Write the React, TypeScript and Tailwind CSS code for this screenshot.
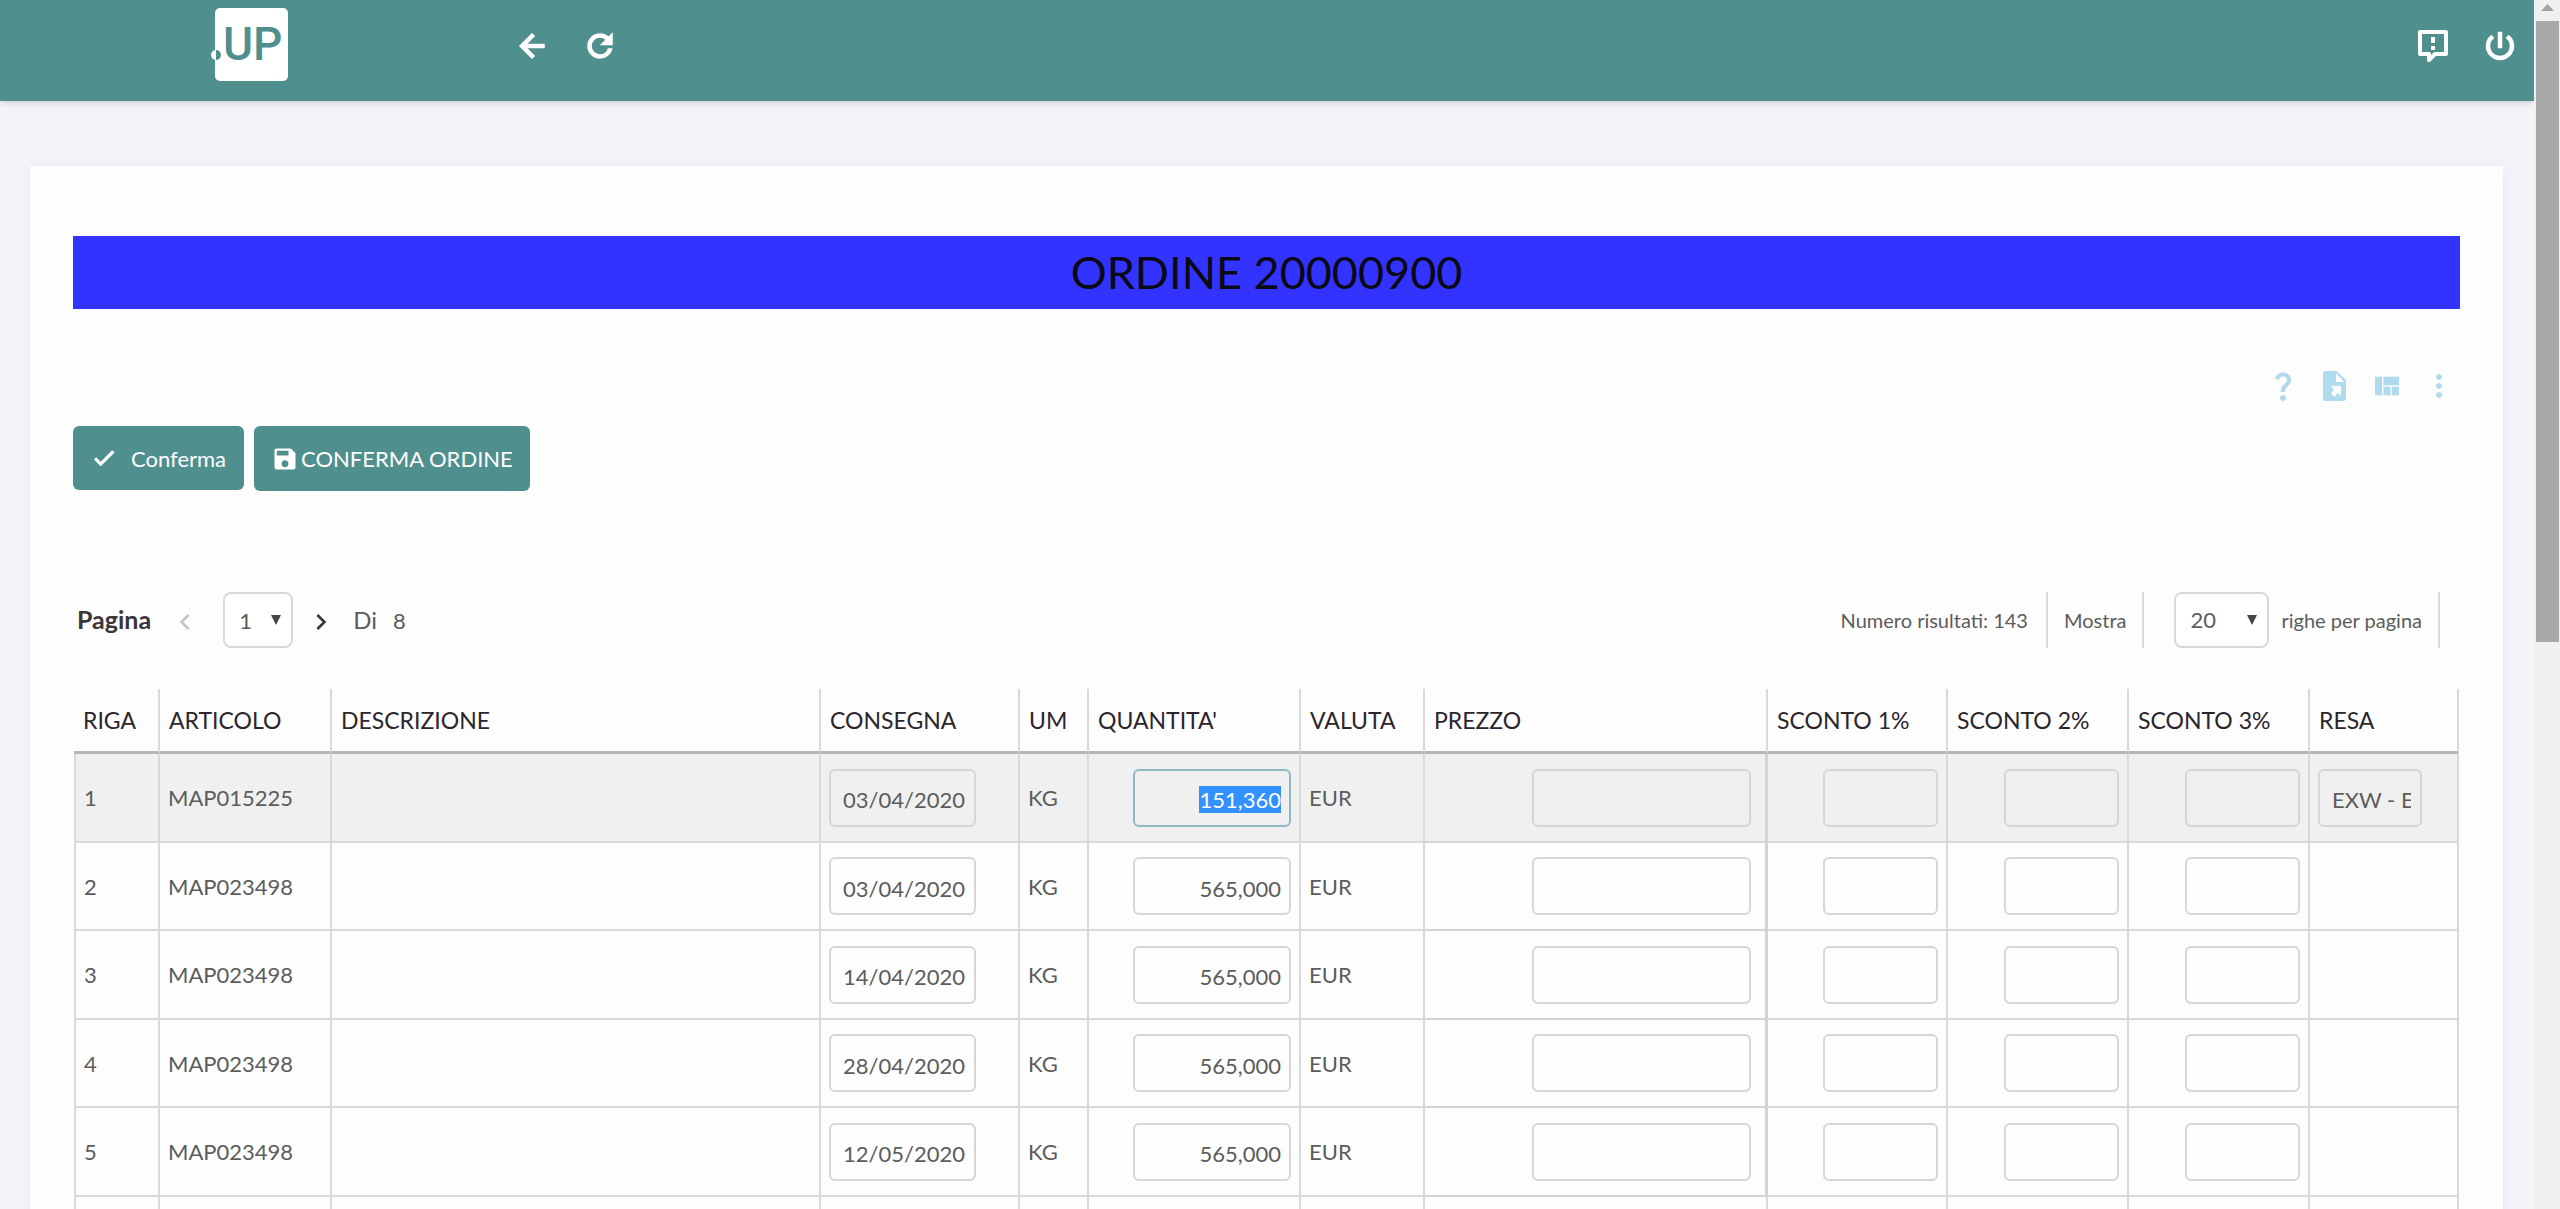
import { useEffect, useRef } from "react";
import type { ReactNode } from "react";
import {
  MdArrowBack,
  MdCheck,
  MdChevronLeft,
  MdChevronRight,
  MdMoreVert,
  MdPowerSettingsNew,
  MdQuestionMark,
  MdRefresh,
  MdSave,
  MdViewQuilt,
} from "react-icons/md";

interface OrderRow {
  riga: string;
  articolo: string;
  consegna: string;
  um: string;
  quantita: string;
  valuta: string;
  resa?: string;
}

const rows: OrderRow[] = [
  { riga: "1", articolo: "MAP015225", consegna: "03/04/2020", um: "KG", quantita: "151,360", valuta: "EUR", resa: "EXW - EX WORKS" },
  { riga: "2", articolo: "MAP023498", consegna: "03/04/2020", um: "KG", quantita: "565,000", valuta: "EUR" },
  { riga: "3", articolo: "MAP023498", consegna: "14/04/2020", um: "KG", quantita: "565,000", valuta: "EUR" },
  { riga: "4", articolo: "MAP023498", consegna: "28/04/2020", um: "KG", quantita: "565,000", valuta: "EUR" },
  { riga: "5", articolo: "MAP023498", consegna: "12/05/2020", um: "KG", quantita: "565,000", valuta: "EUR" },
];

// DESCRIZIONE has no width, it takes whatever is left
const columns = [
  { header: "RIGA", width: "w-[86px]" },
  { header: "ARTICOLO", width: "w-[172px]" },
  { header: "DESCRIZIONE", width: "" },
  { header: "CONSEGNA", width: "w-[199px]" },
  { header: "UM", width: "w-[69px]" },
  { header: "QUANTITA'", width: "w-[212px]" },
  { header: "VALUTA", width: "w-[124px]" },
  { header: "PREZZO", width: "w-[343px]" },
  { header: "SCONTO 1%", width: "w-[180px]" },
  { header: "SCONTO 2%", width: "w-[181px]" },
  { header: "SCONTO 3%", width: "w-[181px]" },
  { header: "RESA", width: "w-[149px]" },
];

const inputClass =
  "block h-[58px] rounded-md border-2 border-[#d6d6d6] bg-transparent pt-1 text-[22px] leading-[27px] text-[#5c5c5c] outline-none";
const cellClass = "border-r-2 border-b-2 border-[#d9d9d9] px-2";

// the md icons carry an empty bounding path, only the drawn one gets the stroke
const boldIcon = "[&>path:not([fill=none])]:stroke-1";

function Logo() {
  return (
    <a href="#" aria-label="UP" className="flex items-center">
      <svg className="h-[73px] w-[77px]" viewBox="0 0 77 73">
        <rect x="4" y="0" width="73" height="73" rx="5" fill="#fff" />
        <circle cx="5" cy="47" r="5" fill="#fff" />
        <path d="M5 42a5 5 0 0 1 0 10z" fill="#4f8f8e" />
        <text x="12" y="52" fontFamily="Roboto, sans-serif" fontSize="46" fontWeight="500" fill="#4f8f8e">
          UP
        </text>
      </svg>
    </a>
  );
}

function FeedbackIcon() {
  return (
    <svg className="h-9 w-8" viewBox="0 0 32 36" fill="none">
      <path d="M3 4h26v22H18l-6 6v-6H3z" stroke="#fff" strokeWidth="4" strokeLinejoin="round" />
      <path d="M14 9h4v6h-4zM14 18h4v4h-4z" fill="#fff" />
    </svg>
  );
}

function FileLinkIcon() {
  return (
    <svg className="h-[30px] w-6" viewBox="0 0 24 30">
      <path
        fillRule="evenodd"
        fill="currentColor"
        d="M3 0h11l9 9v18a3 3 0 0 1-3 3H3a3 3 0 0 1-3-3V3a3 3 0 0 1 3-3zM13 2v9h8zM8 15h10v10l-3-3-4 4-3-4 3-3z"
      />
    </svg>
  );
}

function IconButton({ label, children }: { label: string; children: ReactNode }) {
  return (
    <button type="button" aria-label={label} className="flex items-center justify-center">
      {children}
    </button>
  );
}

interface DropDownProps {
  label: string;
  value: string;
  width: string;
}

function DropDown({ label, value, width }: DropDownProps) {
  return (
    <div className={`relative ${width}`}>
      <select
        aria-label={label}
        defaultValue={value}
        className="h-14 w-full appearance-none rounded-lg border-2 border-[#d9d9d9] bg-white px-[14px] text-[22px] text-[#5c5c5c]"
      >
        <option>{value}</option>
      </select>
      <svg className="pointer-events-none absolute top-[23px] right-3 h-[10px] w-[10px]" viewBox="0 0 10 10">
        <path d="M0 0h10L5 10z" fill="#4a4446" />
      </svg>
    </div>
  );
}

function TopBar() {
  return (
    <header className="flex h-[101px] items-start justify-between bg-[#4f8f8e] pr-4 pl-[211px] text-white shadow-md">
      <div className="flex pt-2">
        <Logo />
        <div className="ml-[226px] flex items-start gap-8 pt-5">
          <IconButton label="Indietro">
            <MdArrowBack className={`h-9 w-9 ${boldIcon}`} />
          </IconButton>
          <IconButton label="Aggiorna">
            <MdRefresh className={`h-9 w-9 ${boldIcon}`} />
          </IconButton>
        </div>
      </div>
      <div className="flex items-center gap-[33px] pt-7">
        <IconButton label="Segnalazioni">
          <FeedbackIcon />
        </IconButton>
        <IconButton label="Esci">
          <MdPowerSettingsNew className={`h-9 w-9 ${boldIcon}`} />
        </IconButton>
      </div>
    </header>
  );
}

function Pagination() {
  return (
    <div className="mt-[101px] flex h-14 items-center justify-between pr-5 pl-1 text-[#5c5c5c]">
      <div className="flex items-center">
        <span className="text-[25px] font-bold text-[#3b3539]">Pagina</span>
        <button type="button" aria-label="Pagina precedente" className="ml-[18px] pt-1 text-[#c4c4c4]">
          <MdChevronLeft className="h-8 w-8" />
        </button>
        <div className="ml-[22px]">
          <DropDown label="Pagina" value="1" width="w-[70px]" />
        </div>
        <button type="button" aria-label="Pagina successiva" className="ml-3 pt-1 text-[#3b3539]">
          <MdChevronRight className="h-8 w-8" />
        </button>
        <span className="ml-4 text-2xl">Di</span>
        <span className="ml-4 text-[22px]">8</span>
      </div>
      <div className="flex items-stretch text-xl">
        <span className="flex items-center border-r-2 border-[#d9d9d9] pr-[18px]">Numero risultati: 143</span>
        <span className="flex items-center border-r-2 border-[#d9d9d9] px-4">Mostra</span>
        <div className="flex items-center border-r-2 border-[#d9d9d9] pr-4 pl-[30px]">
          <DropDown label="Righe per pagina" value="20" width="w-[95px]" />
          <span className="ml-3">righe per pagina</span>
        </div>
      </div>
    </div>
  );
}

function OrderTable() {
  const activeRef = useRef<HTMLInputElement>(null);

  useEffect(() => {
    activeRef.current?.focus();
    activeRef.current?.select();
  }, []);

  return (
    <div className="mt-[41px] px-px">
      <table className="w-full table-fixed border-separate border-spacing-0 text-left text-[22px] text-[#5c5c5c]">
        <thead>
          <tr className="h-[65px]">
            {columns.map((col) => (
              <th
                key={col.header}
                className={`border-r-2 border-b-3 border-r-[#d9d9d9] border-b-[#b5b5b5] pl-[9px] text-[23px] font-normal whitespace-nowrap text-[#2b252c] ${col.width}`}
              >
                {col.header}
              </th>
            ))}
          </tr>
        </thead>
        <tbody>
          {rows.map((row, i) => (
            <tr key={row.riga} className="odd:h-[89px] even:h-[88px] first:h-[88px] first:bg-[#f0f0f0]">
              <td className={`border-l-2 ${cellClass}`}>{row.riga}</td>
              <td className={cellClass}>{row.articolo}</td>
              <td className={cellClass}></td>
              <td className={cellClass}>
                <input aria-label={`Consegna riga ${row.riga}`} defaultValue={row.consegna} className={`w-[147px] pr-1 pl-3 ${inputClass}`} />
              </td>
              <td className={cellClass}>{row.um}</td>
              <td className={cellClass}>
                <input
                  ref={i === 0 ? activeRef : undefined}
                  aria-label={`Quantità riga ${row.riga}`}
                  defaultValue={row.quantita}
                  className={`ml-auto w-[158px] px-2 text-right selection:bg-[#3390ff] selection:text-white focus:border-[#8fb9c4] ${inputClass}`}
                />
              </td>
              <td className={cellClass}>{row.valuta}</td>
              <td className="border-r-3 border-b-2 border-[#d4d4d4] pr-[14px]">
                <input aria-label={`Prezzo riga ${row.riga}`} className={`ml-auto w-[219px] px-2 ${inputClass}`} />
              </td>
              {[1, 2, 3].map((n) => (
                <td key={n} className={cellClass}>
                  <input aria-label={`Sconto ${n}% riga ${row.riga}`} className={`ml-auto w-[115px] px-2 ${inputClass}`} />
                </td>
              ))}
              <td className={cellClass}>
                {row.resa && (
                  <input aria-label={`Resa riga ${row.riga}`} defaultValue={row.resa} className={`w-[104px] pr-[9px] pl-3 ${inputClass}`} />
                )}
              </td>
            </tr>
          ))}
          <tr className="h-[88px]">
            <td className={`border-l-2 ${cellClass}`}></td>
            {columns.slice(1).map((col) => (
              <td key={col.header} className={cellClass}></td>
            ))}
          </tr>
        </tbody>
      </table>
    </div>
  );
}

function ScrollBar() {
  return (
    <div className="flex w-[26px] shrink-0 flex-col items-center bg-[#f0f0f0]">
      <svg className="mt-1 h-[7px] w-[13px]" viewBox="0 0 13 7">
        <path d="M6.500 0L13 7H0z" fill="#a3a3a3" />
      </svg>
      <div className="mt-[10px] h-[621px] w-[23px] bg-[#a8a8a8]" />
    </div>
  );
}

export default function App() {
  return (
    <div className="flex h-screen overflow-hidden bg-[#f3f4f9] font-[Lato,sans-serif]">
      <div className="min-w-0 flex-1">
        <TopBar />
        <main className="mt-[65px] mr-[31px] ml-[30px] bg-[#fdfdfe] px-[43px] pt-[70px] shadow-[0_0_12px_rgba(80,80,140,0.06)]">
          <h1 className="h-[73px] bg-[#3333ff] text-center text-[45px] leading-[73px] text-[#0a0a14]">ORDINE 20000900</h1>

          {/* Table tools */}
          <div className="mt-[59px] flex h-9 items-center justify-end pr-[3px] text-[#b0dbec]">
            <IconButton label="Aiuto">
              <MdQuestionMark className="h-9 w-9" />
            </IconButton>
            <span className="w-[22px]" />
            <IconButton label="Esporta">
              <FileLinkIcon />
            </IconButton>
            <span className="w-6" />
            <IconButton label="Vista">
              <MdViewQuilt className="h-8 w-8" />
            </IconButton>
            <span className="w-[18px]" />
            <IconButton label="Altro">
              <MdMoreVert className="h-9 w-9" />
            </IconButton>
          </div>

          <div className="mt-[22px] flex items-start gap-[10px] text-[22px] text-white">
            <button type="button" className="flex h-16 items-center rounded-md bg-[#4f8f8e] px-[18px]">
              <MdCheck className={`mr-[14px] h-[26px] w-[26px] ${boldIcon}`} />
              Conferma
            </button>
            <button type="button" className="flex h-[65px] items-center rounded-md bg-[#4f8f8e] px-[17px]">
              <MdSave className="mr-0.5 h-7 w-7" />
              CONFERMA ORDINE
            </button>
          </div>

          <Pagination />
          <OrderTable />
        </main>
      </div>
      <ScrollBar />
    </div>
  );
}
